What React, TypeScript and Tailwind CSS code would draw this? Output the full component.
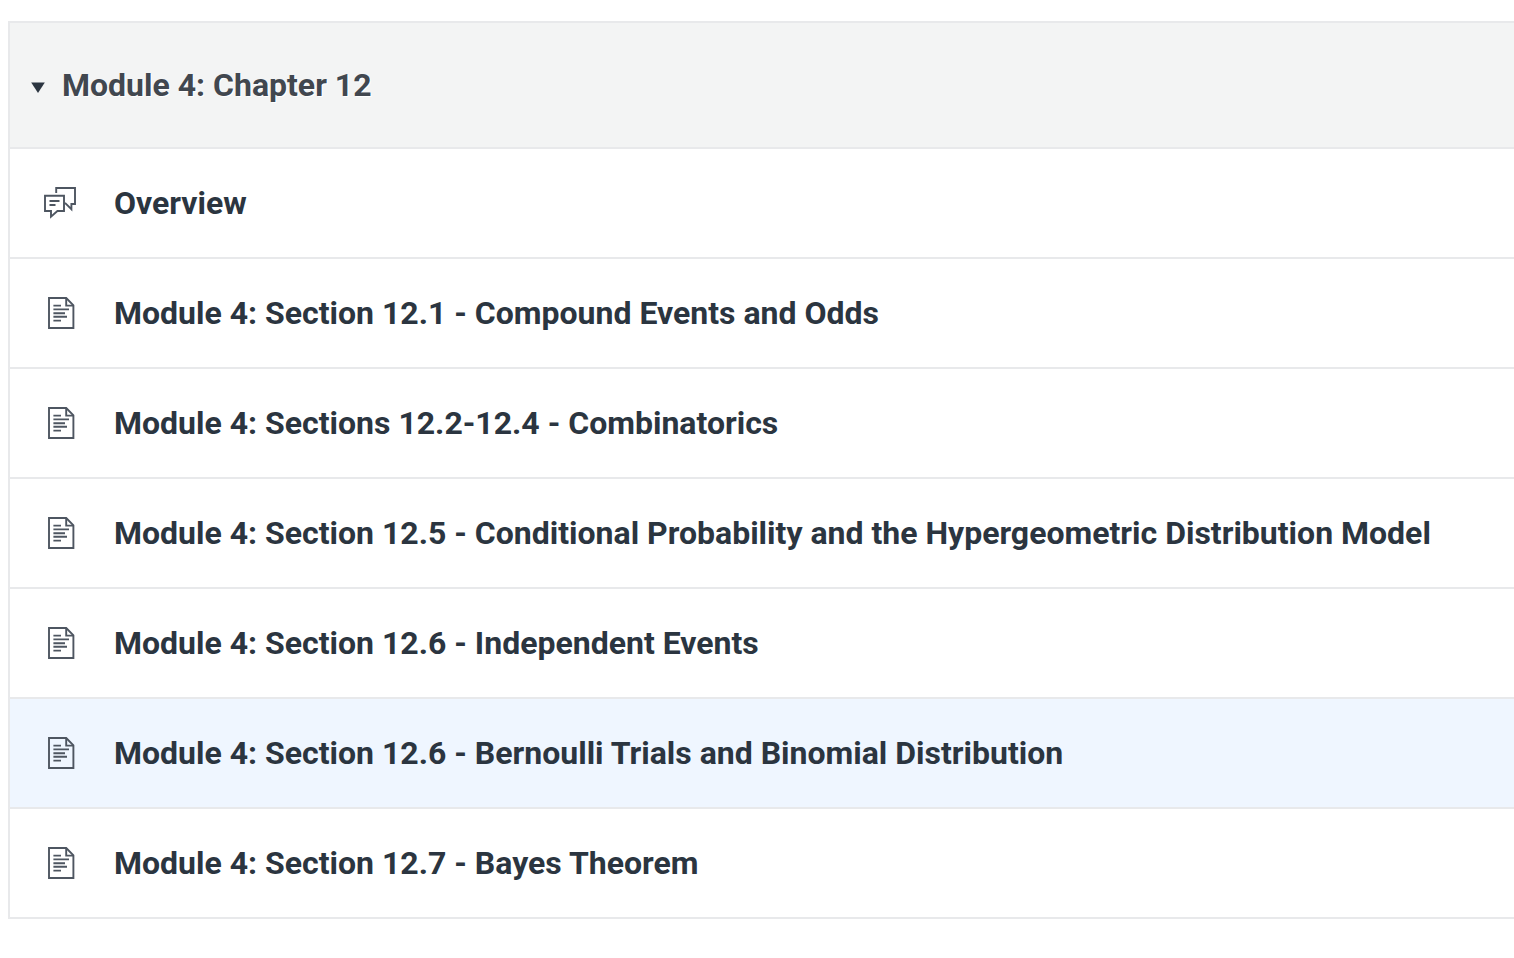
import React, { useState } from 'react';

type ItemKind = 'discussion' | 'page';

interface ModuleItem {
  kind: ItemKind;
  title: string;
  active?: boolean;
}

const items: ModuleItem[] = [
  { kind: 'discussion', title: 'Overview' },
  { kind: 'page', title: 'Module 4: Section 12.1 - Compound Events and Odds' },
  { kind: 'page', title: 'Module 4: Sections 12.2-12.4 - Combinatorics' },
  { kind: 'page', title: 'Module 4: Section 12.5 - Conditional Probability and the Hypergeometric Distribution Model' },
  { kind: 'page', title: 'Module 4: Section 12.6 - Independent Events' },
  { kind: 'page', title: 'Module 4: Section 12.6 - Bernoulli Trials and Binomial Distribution', active: true },
  { kind: 'page', title: 'Module 4: Section 12.7 - Bayes Theorem' },
];

const DiscussionIcon: React.FC = () => (
  <svg width="32" height="32" viewBox="0 0 32 32" fill="none" stroke="currentColor" strokeWidth="1.9" aria-hidden="true">
    <path d="M12.2 6V1H31V17H27.4V22.2L21 15.8" />
    <path d="M1 8.8H20V24H13.4L7 29.6V24H1Z" />
    <path d="M5.5 14H15.5M5.5 18H11.5" />
  </svg>
);

const PageIcon: React.FC = () => (
  <svg width="28" height="32" viewBox="0 0 28 32" fill="none" stroke="currentColor" strokeWidth="1.9" aria-hidden="true">
    <path d="M1 1H18.2L25.4 8.4V31H1Z" />
    <path d="M18.2 1V8.6H25.4" />
    <path d="M5.4 8.6H13M5.4 12.4H21M5.4 16.2H17M5.4 19.8H19M5.4 23.6H13" />
  </svg>
);

const ItemRow: React.FC<{ item: ModuleItem }> = ({ item }) => (
  <li className={`flex items-center border-b-2 border-[#e8e9eb] py-8 ${item.active ? 'bg-[#eff6ff]' : 'bg-white'}`}>
    <span className="flex w-26 shrink-0 items-center pl-[34px] text-[#4e5661]">
      {item.kind === 'discussion' ? <DiscussionIcon /> : <span className="pl-1"><PageIcon /></span>}
    </span>
    <a href="#" className="text-[32px] leading-11 font-bold text-[#2b3540]">{item.title}</a>
  </li>
);

const App: React.FC = () => {
  const [open, setOpen] = useState(true);

  return (
    <main className="min-h-screen bg-white pt-[21px] pb-10 pl-2 font-['Roboto',sans-serif]">
      <section className="border-t-2 border-l-2 border-[#e8e9eb]">
        <h2 className="border-b-2 border-[#e8e9eb] bg-[#f3f4f4]">
          <button
            type="button"
            aria-expanded={open}
            onClick={() => setOpen(!open)}
            className="flex w-full cursor-pointer items-center gap-4 py-10 pl-5 text-left text-[32px] leading-11 font-bold text-[#41474f] text-shadow-[1px_1px_0_#ffffff]"
          >
            <svg width="16" height="12" viewBox="0 0 16 12" className={`mt-1 ${open ? '' : '-rotate-90'}`} aria-hidden="true">
              <path d="M1.2 1.4H14.8L8 12Z" fill="#2b3540" />
            </svg>
            Module 4: Chapter 12
          </button>
        </h2>
        {open && (
          <ul>
            {items.map((item) => (
              <ItemRow key={item.title} item={item} />
            ))}
          </ul>
        )}
      </section>
    </main>
  );
};

export default App;
